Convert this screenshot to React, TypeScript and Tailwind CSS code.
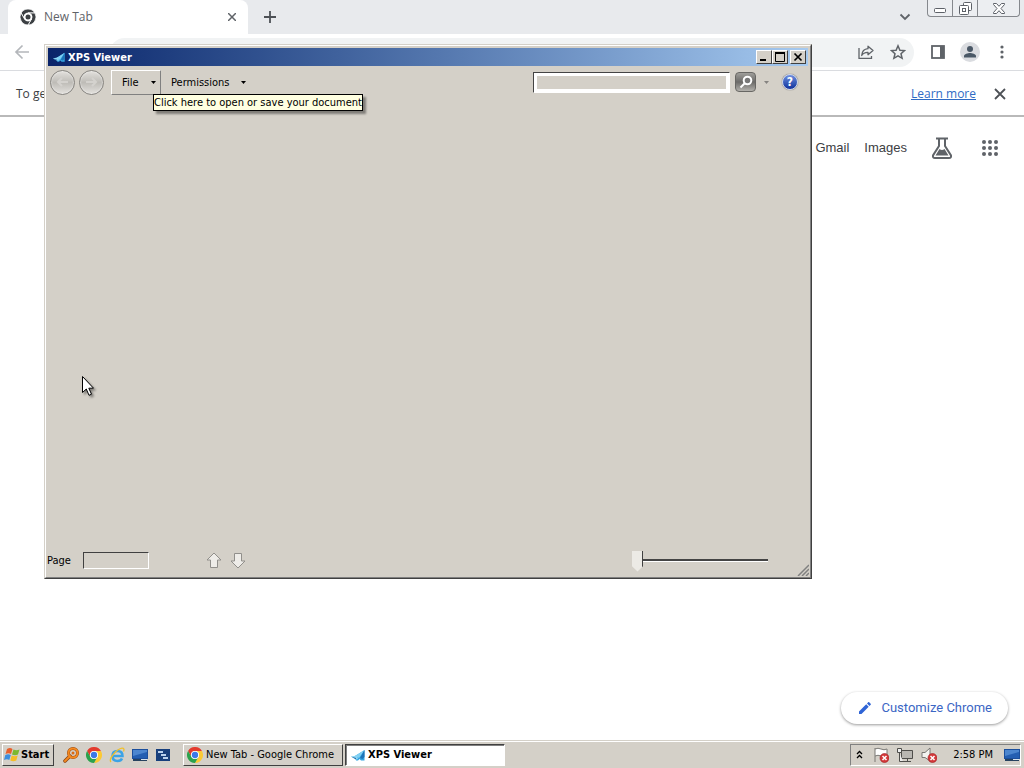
import type { ReactNode } from 'react';

const raised = 'border border-t-white border-l-white border-r-[#404040] border-b-[#404040] bg-[#d4d0c8]';
const sunken = 'border border-t-[#808080] border-l-[#808080] border-r-white border-b-white';

function ChromeLogo({ size, mono = false }: { size: number; mono?: boolean }) {
  const [red, green, yellow, blue] = mono
    ? ['#3c4043', '#3c4043', '#3c4043', '#3c4043']
    : ['#e33b2e', '#2ba24c', '#fcc934', '#3b78e7'];
  const gap = mono ? '#ffffff' : 'none';
  return (
    <svg width={size} height={size} viewBox="0 0 48 48" className="shrink-0">
      <path d="M3.2 12A24 24 0 0 1 44.8 12H24A12 12 0 0 0 13.6 30Z" fill={red} stroke={gap} strokeWidth="2.5" />
      <path d="M44.8 12A24 24 0 0 1 24 48L34.4 30A12 12 0 0 0 24 12Z" fill={yellow} stroke={gap} strokeWidth="2.5" />
      <path d="M24 48A24 24 0 0 1 3.2 12L13.6 30A12 12 0 0 0 34.4 30Z" fill={green} stroke={gap} strokeWidth="2.5" />
      <circle cx="24" cy="24" r="12" fill="#fff" />
      <circle cx="24" cy="24" r={mono ? 7.5 : 9.5} fill={blue} />
    </svg>
  );
}

function XpsIcon({ size }: { size: number }) {
  return (
    <svg width={size} height={size} viewBox="0 0 16 16" className="shrink-0">
      <path d="M5 9 14.500 3v10.500H11L9.500 12 8 13.500H6Z" fill="#35a5e2" />
      <path d="M5 9 14.500 3 9 11Z" fill="#7fd0f3" />
      <path d="m10 11 4.500-8v7l-2 2Z" fill="#1c74b8" />
      <path d="M1 9.500 7 8.500l1 3.500-2 .5Z" fill="#8ad5f4" />
      <path d="m1 9.500 5 1.500v1.500Z" fill="#2a6fa8" />
    </svg>
  );
}

function MonitorIcon() {
  return (
    <svg width="16" height="16" viewBox="0 0 16 16" className="shrink-0">
      <path d="M0 2h16v10H0Z" fill="#1c4f9c" />
      <path d="M1 3h14v8H1Z" fill="#245fb2" />
      <path d="M1 3h14v2L1 9Z" fill="#4c86cf" />
      <path d="M1 12h14v2H1Z" fill="#26425f" />
      <path d="M9 12h6v1H9Z" fill="#d8e4ee" />
    </svg>
  );
}

function ErrorBadge() {
  return (
    <g>
      <circle cx="11.5" cy="11" r="4.500" fill="#d4383a" stroke="#9c1c20" strokeWidth=".6" />
      <path d="m9.500 9 4 4m0-4-4 4" stroke="#fff" strokeWidth="1.5" />
    </g>
  );
}

function Caret({ className = 'text-black' }: { className?: string }) {
  return (
    <svg width="5" height="3" viewBox="0 0 5 3" className={`shrink-0 ${className}`}>
      <path d="M0 0h5L2.5 3Z" fill="currentColor" />
    </svg>
  );
}

function BrowserTabs() {
  return (
    <div className="flex h-[34px] bg-[#e8eaed] pl-2">
      <div className="flex w-60 items-center rounded-t-lg bg-white pr-2 pl-3 text-[#5f6368]">
        <ChromeLogo size={16} mono />
        <span className="ml-2 flex-1 text-[12px]">New Tab</span>
        <button aria-label="Close tab" className="flex h-4 w-4 items-center justify-center">
          <svg width="8" height="8" viewBox="0 0 8 8" stroke="#5f6368" strokeWidth="1.5">
            <path d="m0 0 8 8M8 0 0 8" />
          </svg>
        </button>
      </div>
      <button aria-label="New tab" className="ml-4 flex w-3 items-center">
        <svg width="12" height="12" viewBox="0 0 12 12" stroke="#4d5156" strokeWidth="1.8">
          <path d="M6 0v12M0 6h12" />
        </svg>
      </button>
      <button aria-label="Search tabs" className="mr-4 ml-auto flex w-3 items-center">
        <svg width="12" height="12" viewBox="0 0 12 12" fill="none" stroke="#5f6368" strokeWidth="1.8">
          <path d="m1.5 3.5 4.5 4.5 4.5-4.5" />
        </svg>
      </button>
      <div className="mr-1 flex h-[17px] divide-x divide-[#85888d] rounded-b border border-t-0 border-[#85888d] bg-[#eceef1]">
        <button aria-label="Minimize" className="flex w-[25px] items-center justify-center">
          <svg width="12" height="16" viewBox="0 0 12 16">
            <rect x=".5" y="8.5" width="11" height="4" rx="1" fill="#fff" stroke="#5d6168" />
          </svg>
        </button>
        <button aria-label="Restore" className="flex w-[25px] items-center justify-center">
          <svg width="13" height="13" viewBox="0 0 13 13" fill="#fff" stroke="#5d6168">
            <rect x="4.500" y=".5" width="8" height="8" rx="1" />
            <rect x=".5" y="3.500" width="9" height="9" rx="1" />
            <rect x="3.500" y="6.500" width="3" height="3" />
          </svg>
        </button>
        <button aria-label="Close" className="flex w-[41px] items-center justify-center">
          <svg width="12" height="11" viewBox="0 0 12 11" fill="#fff" stroke="#5d6168">
            <path d="M.5.5h3L6 3.300 8.500.5h3v1L8 5.500l3.500 4v1h-3L6 7.700 3.500 10.500h-3v-1L4 5.500.5 1.500Z" />
          </svg>
        </button>
      </div>
    </div>
  );
}

function BrowserToolbar() {
  return (
    <div className="flex h-[37px] items-center border-b border-[#dadce0] bg-white pr-[14px] pl-[14px] text-[#5f6368]">
      <button aria-label="Back">
        <svg width="16" height="16" viewBox="0 0 16 16" fill="none" stroke="#b4b7bb" strokeWidth="1.700">
          <path d="M15 8H2m6.500-6.500L2 8l6.500 6.500" />
        </svg>
      </button>
      <div className="ml-20 flex h-[29px] flex-1 items-center justify-end gap-4 rounded-full bg-[#f1f3f4] pr-2">
        <button aria-label="Share this page">
          <svg width="16" height="16" viewBox="0 0 16 16" fill="none" stroke="#5f6368" strokeWidth="1.300">
            <path d="M1 4v10.300h12.500V12" />
            <path d="M10 2.200 15 6.500l-5 4.200V8.300C7 8.200 5 9.200 3.700 11.500 4 7.500 6.500 5 10 4.700Z" strokeLinejoin="round" />
          </svg>
        </button>
        <button aria-label="Bookmark this tab">
          <svg width="16" height="16" viewBox="0 0 16 16" fill="none" stroke="#5f6368" strokeWidth="1.500">
            <path d="m8 1.800 1.900 4.400 4.600.4-3.500 3.100 1.100 4.600L8 11.900l-4.100 2.400L5 9.700 1.500 6.600l4.600-.4Z" />
          </svg>
        </button>
      </div>
      <button aria-label="Side panel" className="ml-4">
        <svg width="16" height="16" viewBox="0 0 16 16">
          <rect x="2" y="2" width="12" height="12" fill="#fff" stroke="#5f6368" strokeWidth="1.800" />
          <path d="M10 2h4v12h-4Z" fill="#5f6368" />
        </svg>
      </button>
      <button aria-label="Profile" className="ml-[14px] flex h-5 w-5 items-center justify-center rounded-full bg-[#dadce0]">
        <svg width="14" height="14" viewBox="0 0 14 14" fill="#4a5866">
          <circle cx="7" cy="4" r="3" />
          <path d="M1 12.500V11c0-2 4-3 6-3s6 1 6 3v1.500Z" />
        </svg>
      </button>
      <button aria-label="Menu" className="ml-[14px]">
        <svg width="16" height="16" viewBox="0 0 16 16" fill="#5f6368">
          <circle cx="8" cy="3" r="1.600" />
          <circle cx="8" cy="8" r="1.600" />
          <circle cx="8" cy="13" r="1.600" />
        </svg>
      </button>
    </div>
  );
}

function Browser() {
  return (
    <main className="flex min-h-0 flex-1 flex-col bg-white font-['Open_Sans',sans-serif]">
      <BrowserTabs />
      <BrowserToolbar />
      <div className="flex h-[46px] items-center border-b-2 border-[#b9b9b9] pt-0.5 pr-[18px] pl-4 text-[12px] text-[#3c4043]">
        <span>To get</span>
        <a href="#learn" className="ml-auto text-[#2f6bc4] underline">Learn more</a>
        <button aria-label="Dismiss" className="ml-[18px]">
          <svg width="12" height="12" viewBox="0 0 12 12" stroke="#4d5156" strokeWidth="1.800">
            <path d="m1 1 10 10M11 1 1 11" />
          </svg>
        </button>
      </div>
      <div className="flex h-[62px] items-center justify-end pr-[26px] font-['Liberation_Sans',Arial,sans-serif] text-[13px] text-[#3c4043]">
        <a href="#gmail">Gmail</a>
        <a href="#images" className="ml-[15px]">Images</a>
        <button aria-label="Search Labs" className="ml-6">
          <svg width="22" height="22" viewBox="0 0 22 22" fill="none" stroke="#5f6368" strokeWidth="2">
            <path d="M5 1.500h12M8 2v7L2 18.500Q1.500 21 4 21h14q2.500 0 2-2.500L14 9V2" />
            <path d="m8.500 12-4 6.500h13L13.500 12q-2.500 2-5 0Z" fill="#5f6368" stroke="none" />
          </svg>
        </button>
        <button aria-label="Google apps" className="ml-[29px]">
          <svg width="16" height="16" viewBox="0 0 16 16" fill="#5f6368">
            {[2, 8, 14].map((y) => [2, 8, 14].map((x) => <circle key={`${x}-${y}`} cx={x} cy={y} r="2" />))}
          </svg>
        </button>
      </div>
      <button className="mt-auto mr-4 mb-4 flex h-8 items-center gap-2 self-end rounded-full bg-white px-4 font-['Roboto',sans-serif] text-[13px] text-[#3b66c4] shadow-[0_1px_3px_rgba(0,0,0,0.4)]">
        <svg width="16" height="16" viewBox="0 0 16 16" fill="#2f64d6">
          <path d="M2 11.500V14h2.500l7.200-7.200-2.500-2.500ZM13.700 4.800c.3-.3.3-.7 0-1l-1.500-1.500c-.3-.3-.7-.3-1 0L10 3.500 12.500 6Z" />
        </svg>
        Customize Chrome
      </button>
    </main>
  );
}

function CaptionButton({ label, children }: { label: string; children: ReactNode }) {
  return (
    <button aria-label={label} className={`flex h-[14px] w-4 items-center justify-center ${raised}`}>
      <svg width="10" height="10" viewBox="0 0 10 10" fill="none" stroke="#000">
        {children}
      </svg>
    </button>
  );
}

function NavButton({ label, d }: { label: string; d: string }) {
  return (
    <button
      aria-label={label}
      className="flex h-[25px] w-[25px] items-center justify-center rounded-full border border-[#85837f] bg-linear-to-b from-[#e3e1dd] via-[#bebcb7] to-[#e4e2de] shadow-[inset_0_0_2px_#fff]"
    >
      <svg width="13" height="12" viewBox="0 0 13 12" fill="none" stroke="#d4d2ce" strokeWidth="2">
        <path d={d} />
      </svg>
    </button>
  );
}

function PageArrow({ label, d }: { label: string; d: string }) {
  return (
    <button aria-label={label}>
      <svg width="16" height="17" viewBox="0 0 16 17" fill="#eeece8" stroke="#918f8b">
        <path d={d} strokeLinejoin="round" />
      </svg>
    </button>
  );
}

function XpsViewer() {
  return (
    <section className="absolute top-11 left-11 flex h-[535px] w-3/4 flex-col border border-t-[#d4d0c8] border-r-[#404040] border-b-[#404040] border-l-[#d4d0c8] bg-[#d4d0c8]">
      <div className="flex flex-1 flex-col border border-t-white border-r-[#808080] border-b-[#808080] border-l-white">
        <header className="mx-0.5 mt-0.5 flex h-[18px] items-center bg-linear-to-r from-[#0a246a] to-[#a6caf0] pr-0.5 pl-1 text-white">
          <XpsIcon size={14} />
          <h1 className="ml-0.5 flex-1 pt-px text-[11px] font-bold">XPS Viewer</h1>
          <CaptionButton label="Minimize"><path d="M1 8h6" strokeWidth="2" /></CaptionButton>
          <CaptionButton label="Maximize">
            <path d="M.5 1h9M.5 1v8.500h9V1" />
            <path d="M0 1h10" strokeWidth="2" />
          </CaptionButton>
          <span className="w-0.5" />
          <CaptionButton label="Close"><path d="m1.500 1.500 7 7m0-7-7 7" strokeWidth="1.700" /></CaptionButton>
        </header>

        <div className="flex h-8 items-center pr-3 pl-1">
          <div className="flex gap-1">
            <NavButton label="Back" d="M12 6H2m4-4L2 6l4 4" />
            <NavButton label="Forward" d="M1 6h10M7 2l4 4-4 4" />
          </div>
          <div className="relative ml-[7px]">
            <button className="flex h-[25px] w-[50px] items-center border border-t-white border-r-[#808080] border-b-[#808080] border-l-white pt-px pl-[10px]">
              File
              <Caret className="mr-1 ml-auto text-black" />
            </button>
            <div role="tooltip" className="absolute top-6 left-[42px] border border-black bg-[#ffffe1] leading-[15px] whitespace-nowrap shadow-[3px_3px_2px_rgba(0,0,0,0.4)]">
              Click here to open or save your document
            </div>
          </div>
          <button className="ml-[10px] flex h-[25px] items-center gap-3 pt-px">
            Permissions
            <Caret />
          </button>
          <input
            aria-label="Search"
            className="ml-auto h-[21px] w-[197px] min-w-0 border border-t-[#444] border-r-white border-b-white border-l-[#444] px-1 shadow-[inset_0_0_0_3px_#fff] outline-none"
          />
          <button aria-label="Find" className="ml-[5px] flex h-5 w-[21px] items-center justify-center rounded-sm border border-[#686764] bg-linear-to-b from-[#a09f9b] via-[#6b6a68] to-[#b4b2ad]">
            <svg width="16" height="15" viewBox="0 0 16 15" fill="none" stroke="#fff" strokeWidth="2">
              <circle cx="9.500" cy="5.500" r="3.800" fill="#777" />
              <path d="m6.500 8.500-4 4" />
            </svg>
          </button>
          <Caret className="mr-3 ml-2 text-[#858380]" />
          <button aria-label="Help" className="ml-px flex h-4 w-4 items-center justify-center rounded-full border border-[#c9d3ea] bg-linear-to-b from-[#6f8fdf] to-[#12309b] text-[12px] leading-none font-bold text-white shadow-[0_0_1px_#333]">
            ?
          </button>
        </div>

        <div className="flex-1" />

        <footer className="flex h-9 items-center pt-0.5 pl-px">
          <label htmlFor="page" className="w-9 pt-0.5">Page</label>
          <input id="page" className="h-[17px] w-[66px] border border-t-[#404040] border-r-white border-b-white border-l-[#404040] px-1 outline-none" />
          <div className="ml-[57px] flex gap-2">
            <PageArrow label="Previous page" d="M8 1 15 8h-3.500v7.500h-7V8H1Z" />
            <PageArrow label="Next page" d="M8 16 15 9h-3.500V1.500h-7V9H1Z" />
          </div>
          <input
            type="range"
            aria-label="Zoom"
            defaultValue={0}
            className="mr-[29px] ml-auto h-[21px] w-[136px] appearance-none bg-transparent [&::-webkit-slider-runnable-track]:h-[3px] [&::-webkit-slider-runnable-track]:border-t-2 [&::-webkit-slider-runnable-track]:border-b [&::-webkit-slider-runnable-track]:border-t-[#444] [&::-webkit-slider-runnable-track]:border-b-white [&::-webkit-slider-thumb]:-mt-[10px] [&::-webkit-slider-thumb]:h-[21px] [&::-webkit-slider-thumb]:w-[11px] [&::-webkit-slider-thumb]:appearance-none [&::-webkit-slider-thumb]:border-r [&::-webkit-slider-thumb]:border-r-[#404040] [&::-webkit-slider-thumb]:bg-[#eceae5] [&::-webkit-slider-thumb]:[clip-path:polygon(0_0,100%_0,100%_75%,50%_100%,0_75%)]"
          />
          <svg width="12" height="12" viewBox="0 0 12 12" className="mr-px mb-px self-end" stroke="#808080" strokeWidth="1.500">
            <path d="M1 12 12 1M5 12l7-7M9 12l3-3" />
          </svg>
        </footer>
      </div>
    </section>
  );
}

function Taskbar() {
  return (
    <nav className="flex h-7 items-center border-t border-[#d4d0c8] bg-[#d4d0c8] pr-[3px] pl-0.5 shadow-[inset_0_1px_0_#fff]">
      <button className={`flex h-[22px] w-[52px] items-center gap-px pl-px text-[11px] font-bold ${raised}`}>
        <svg width="16" height="16" viewBox="0 0 16 16" className="shrink-0">
          <path d="M3 2q3-2 5.500 0L7 7Q4.500 5.500 1.500 7Z" fill="#e8602c" />
          <path d="M9.500 2.500q3 1.500 6 0L14 7.500q-3 1.500-6 0Z" fill="#7cb82f" />
          <path d="M1.300 8q3-1.500 5.500 0L5.300 13Q3 11.500 0 13Z" fill="#3c8ede" />
          <path d="M7.700 8.500q3 1.500 6 0L12.300 13.500q-3 1.500-6 0Z" fill="#f6bd25" />
        </svg>
        Start
      </button>
      <div className="ml-[9px] flex gap-[7px]">
        <button aria-label="Search">
          <svg width="16" height="16" viewBox="0 0 16 16" fill="none">
            <path d="M7 9 2 14" stroke="#8a4310" strokeWidth="3.500" strokeLinecap="round" />
            <circle cx="10" cy="6" r="4.500" stroke="#9b4b10" strokeWidth="3" />
            <circle cx="10" cy="6" r="4.500" stroke="#f58a20" strokeWidth="2" />
            <path d="M7 9 2 14" stroke="#f58a20" strokeWidth="2" strokeLinecap="round" />
            <circle cx="10" cy="6" r="1.500" fill="#d86a16" />
          </svg>
        </button>
        <button aria-label="Google Chrome"><ChromeLogo size={16} /></button>
        <button aria-label="Internet Explorer">
          <svg width="16" height="16" viewBox="0 0 16 16" fill="none">
            <path d="M4 9h9.500Q13.500 4 8.500 4T3.500 9t5 5q3.500 0 4.500-2.500" stroke="#3ba3e6" strokeWidth="2.500" />
            <path d="M2 15C-1 12 8 2 13 1.200q3-.2 1.500 3.300" stroke="#f0c02c" strokeWidth="1.300" />
          </svg>
        </button>
        <button aria-label="Show desktop"><MonitorIcon /></button>
        <button aria-label="Switch windows">
          <svg width="16" height="16" viewBox="0 0 16 16">
            <path d="M1 2h14v12H1Z" fill="#173f7c" />
            <path d="M2.500 3.500h6v3h-6ZM5.500 6.500h6v3h-6ZM7.500 9.500h6v3h-6Z" fill="#e4effb" stroke="#173f7c" />
            <path d="M3 5h5M6 8h5M8 11h5" stroke="#8fb4e0" />
          </svg>
        </button>
      </div>
      <div className="ml-3 flex gap-0.5">
        <button className={`flex h-[22px] w-40 items-center gap-[3px] pl-[3px] whitespace-nowrap ${raised}`}>
          <ChromeLogo size={16} />
          New Tab - Google Chrome
        </button>
        <button className="flex h-[22px] w-40 items-center gap-0.5 border border-t-[#404040] border-r-white border-b-white border-l-[#404040] bg-white pl-1 font-bold shadow-[inset_1px_1px_0_#808080]">
          <XpsIcon size={16} />
          XPS Viewer
        </button>
      </div>
      <div className={`ml-auto flex h-[22px] items-center pl-[5px] ${sunken}`}>
        <button aria-label="Show hidden icons">
          <svg width="7" height="9" viewBox="0 0 7 9" fill="none" stroke="#000" strokeWidth="1.300">
            <path d="m1 4 2.500-2.500L6 4M1 8l2.500-2.500L6 8" />
          </svg>
        </button>
        <div className="ml-[10px] flex gap-2">
          <svg width="16" height="16" viewBox="0 0 16 16" role="img" aria-label="Action Center">
            <path d="M2 1v14M2 2q3-1.500 6 0t6 0v7q-3 1.500-6 0T2 9" fill="#fff" stroke="#7a7975" />
            <ErrorBadge />
          </svg>
          <svg width="16" height="16" viewBox="0 0 16 16" role="img" aria-label="Network" stroke="#4f4e4b">
            <path d="M4.500 3.500h11v8h-11Z" fill="#b9b7b2" />
            <path d="M6 14.500h8M10.500 12v2" />
            <path d="M.5 1.500v4h4v-4ZM2.500 5.500v9H6" fill="#eee" />
          </svg>
          <svg width="16" height="16" viewBox="0 0 16 16" role="img" aria-label="Volume muted">
            <path d="M1 5.500h3L9 1v13L4 10.500H1Z" fill="#f4f3f0" stroke="#7a7975" />
            <ErrorBadge />
          </svg>
        </div>
        <time className="mr-[11px] ml-4 whitespace-nowrap">2:58 PM</time>
        <MonitorIcon />
      </div>
    </nav>
  );
}

export default function App() {
  return (
    <div className="relative flex h-screen flex-col overflow-hidden bg-white font-['DejaVu_Sans_Condensed','DejaVu_Sans',sans-serif] text-[11px] leading-4 text-black">
      <Browser />
      <Taskbar />
      <XpsViewer />
      <svg width="12" height="20" viewBox="0 0 12 20" className="pointer-events-none absolute top-[376px] left-[82px] drop-shadow-[2px_2px_1px_rgba(0,0,0,0.4)]">
        <path d="M.5.5v16l3.800-3.500 2.700 6.300 2.500-1.100-2.700-6h4.700Z" fill="#fff" stroke="#000" />
      </svg>
    </div>
  );
}
